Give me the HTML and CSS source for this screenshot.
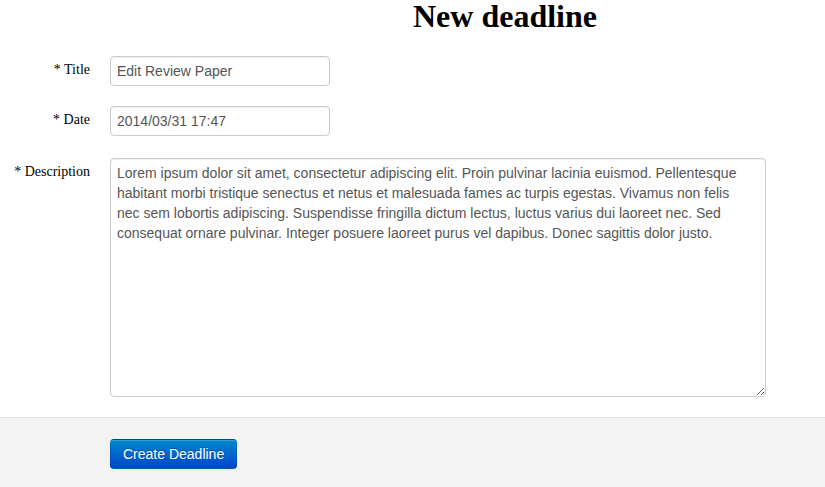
FILE: index.html
```html
<!DOCTYPE html>
<html>
<head>
<meta charset="utf-8">
<link rel="stylesheet" href="styles.css">
</head>
<body>
<h1 class="page-title">New deadline</h1>
<form class="form-horizontal">
  <div class="control-group">
    <label class="control-label">* Title</label>
    <div class="controls"><input class="text-input" type="text" value="Edit Review Paper"></div>
  </div>
  <div class="control-group">
    <label class="control-label">* Date</label>
    <div class="controls"><input class="text-input" type="text" value="2014/03/31 17:47"></div>
  </div>
  <div class="control-group group-desc">
    <label class="control-label">* Description</label>
    <div class="controls"><textarea class="text-area">Lorem ipsum dolor sit amet, consectetur adipiscing elit. Proin pulvinar lacinia euismod. Pellentesque habitant morbi tristique senectus et netus et malesuada fames ac turpis egestas. Vivamus non felis nec sem lobortis adipiscing. Suspendisse fringilla dictum lectus, luctus varius dui laoreet nec. Sed consequat ornare pulvinar. Integer posuere laoreet purus vel dapibus. Donec sagittis dolor justo.</textarea></div>
  </div>
  <div class="form-actions">
    <button type="button" class="btn-primary">Create Deadline</button>
  </div>
</form>
</body>
</html>
```
FILE: styles.css
```css
html, body {
  margin: 0;
  padding: 0;
  background: #fff;
}
body {
  font-family: "Liberation Serif", "Times New Roman", serif;
  font-size: 14px;
  color: #000;
  min-height: 487px;
  display: flex;
  flex-direction: column;
}
.page-title {
  margin: 0;
  padding: 1px 0 0 185px;
  text-align: center;
  font-size: 32px;
  line-height: 30px;
  font-weight: bold;
}
.form-horizontal {
  margin: 25px 0 0;
  display: flex;
  flex-direction: column;
  flex: 1;
}
.control-group {
  display: flex;
  margin-bottom: 20px;
}
.group-desc {
  margin-top: 2px;
}
.control-label {
  width: 90px;
  flex: none;
  text-align: right;
  padding-top: 4px;
  line-height: 20px;
  font-size: 14px;
  margin-right: 20px;
}
.controls {
  display: flex;
}
.text-input,
.text-area {
  font-family: "Liberation Sans", Arial, Helvetica, sans-serif;
  font-size: 14px;
  line-height: 20px;
  color: #555;
  border: 1px solid #ccc;
  border-radius: 4px;
  box-shadow: inset 0 1px 1px rgba(0, 0, 0, 0.075);
  padding: 4px 6px;
  margin: 0;
  box-sizing: border-box;
  background: #fff;
  outline: none;
}
.text-input {
  width: 220px;
  height: 30px;
}
.text-area {
  width: 656px;
  height: 239px;
  padding-right: 16px;
  resize: both;
  display: block;
}
.form-actions {
  flex: 1;
  background: #f3f3f3;
  border-top: 1px solid #e3e3e3;
  padding: 21px 0 18px 110px;
}
.btn-primary {
  font-family: "Liberation Sans", Arial, Helvetica, sans-serif;
  font-size: 14px;
  line-height: 20px;
  color: #fff;
  padding: 4px 12px;
  height: 30px;
  box-sizing: border-box;
  border: 1px solid;
  border-color: rgba(0, 0, 0, 0.1) rgba(0, 0, 0, 0.1) rgba(0, 0, 0, 0.25);
  border-radius: 4px;
  background: linear-gradient(to bottom, #0088cc, #0044cc);
  text-shadow: 0 -1px 0 rgba(0, 0, 0, 0.25);
  box-shadow: inset 0 1px 0 rgba(255, 255, 255, 0.2), 0 1px 2px rgba(0, 0, 0, 0.05);
  cursor: pointer;
}
```
